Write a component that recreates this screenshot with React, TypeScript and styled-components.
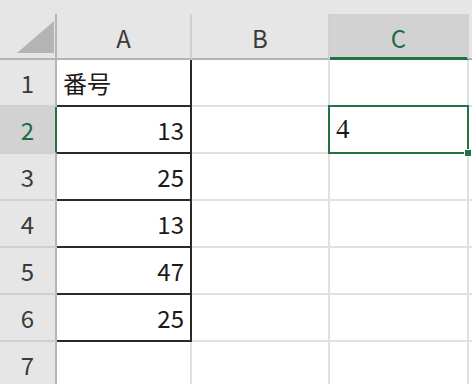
import React from "react";
import styled, { createGlobalStyle, css } from "styled-components";

const Global = createGlobalStyle`
  html, body { margin: 0; padding: 0; background: #ffffff; }
  body { font-family: "Noto Sans CJK JP", "Noto Sans", sans-serif; }
`;

const Sheet = styled.div`
  width: 472px;
  height: 384px;
  overflow: hidden;
  background: #ffffff;
  display: flex;
  flex-direction: column;
`;

const TopStrip = styled.div`
  height: 14px;
  background: #e6e6e6;
  flex: none;
`;

const Grid = styled.div`
  display: grid;
  grid-template-columns: 57px 135px 138px 139px 1fr;
  grid-template-rows: 46px repeat(7, 47px);
`;

const Corner = styled.div`
  background: #e6e6e6;
  border-right: 2px solid #b4b4b4;
  border-bottom: 2px solid #b4b4b4;
  display: flex;
  align-items: flex-end;
  justify-content: flex-end;
  padding: 0 1px 5px 0;
  box-sizing: border-box;
`;

const ColHeader = styled.div<{ $active?: boolean }>`
  background: ${(p) => (p.$active ? "#d2d2d2" : "#e6e6e6")};
  border-right: 2px solid #d0d0d0;
  border-bottom: 2px solid ${(p) => (p.$active ? "#217346" : "#b4b4b4")};
  ${(p) => p.$active && css`box-shadow: inset 0 -1px 0 #217346;`}
  color: ${(p) => (p.$active ? "#1e6b47" : "#3a3a3a")};
  font-size: 24px;
  display: flex;
  align-items: center;
  justify-content: center;
  padding-top: 2px;
  box-sizing: border-box;
`;

const RowHeader = styled.div<{ $active?: boolean }>`
  background: ${(p) => (p.$active ? "#d2d2d2" : "#e6e6e6")};
  border-right: 2px solid ${(p) => (p.$active ? "#217346" : "#b4b4b4")};
  border-bottom: 2px solid #d0d0d0;
  color: ${(p) => (p.$active ? "#1e6b47" : "#3a3a3a")};
  font-size: 24px;
  display: flex;
  align-items: center;
  justify-content: center;
  box-sizing: border-box;
`;

const Cell = styled.div<{ $boxed?: boolean; $align?: "left" | "right" }>`
  position: relative;
  border-right: 2px solid ${(p) => (p.$boxed ? "#2a2a2a" : "#e1e1e1")};
  border-bottom: 2px solid ${(p) => (p.$boxed ? "#2a2a2a" : "#e1e1e1")};
  color: #1a1a1a;
  font-size: 24px;
  display: flex;
  align-items: center;
  justify-content: ${(p) => (p.$align === "right" ? "flex-end" : "flex-start")};
  padding: 0 6px 0 6px;
  box-sizing: border-box;
  white-space: nowrap;
`;

const SerifValue = styled.span`
  font-family: "Liberation Serif", "Times New Roman", serif;
  font-size: 27px;
`;

const Selection = styled.div`
  position: absolute;
  z-index: 2;
  left: -2px;
  top: -2px;
  right: -2px;
  bottom: -2px;
  border: 2px solid #217346;
  pointer-events: none;
`;

const FillHandle = styled.div`
  position: absolute;
  right: -5px;
  bottom: -5px;
  width: 6px;
  height: 6px;
  background: #217346;
  border: 1px solid #ffffff;
`;

const cols = ["A", "B", "C", "D"];
const values: (string | number)[] = ["番号", 13, 25, 13, 47, 25, ""];

export default function App() {
  return (
    <>
      <Global />
      <Sheet>
        <TopStrip />
        <Grid>
          <Corner>
            <svg width="37" height="32" viewBox="0 0 37 32">
              <polygon points="0,32 37,32 37,0" fill="#b4b4b4" />
            </svg>
          </Corner>
          {cols.map((c) => (
            <ColHeader key={c} $active={c === "C"}>
              {c === "D" ? "" : c}
            </ColHeader>
          ))}
          {values.map((v, i) => {
            const row = i + 1;
            const boxed = row <= 6;
            return (
              <React.Fragment key={row}>
                <RowHeader $active={row === 2}>{row}</RowHeader>
                <Cell $boxed={boxed} $align={typeof v === "number" ? "right" : "left"}>
                  {v}
                </Cell>
                <Cell />
                <Cell>
                  {row === 2 && (
                    <>
                      <SerifValue>4</SerifValue>
                      <Selection>
                        <FillHandle />
                      </Selection>
                    </>
                  )}
                </Cell>
                <Cell />
              </React.Fragment>
            );
          })}
        </Grid>
      </Sheet>
    </>
  );
}
